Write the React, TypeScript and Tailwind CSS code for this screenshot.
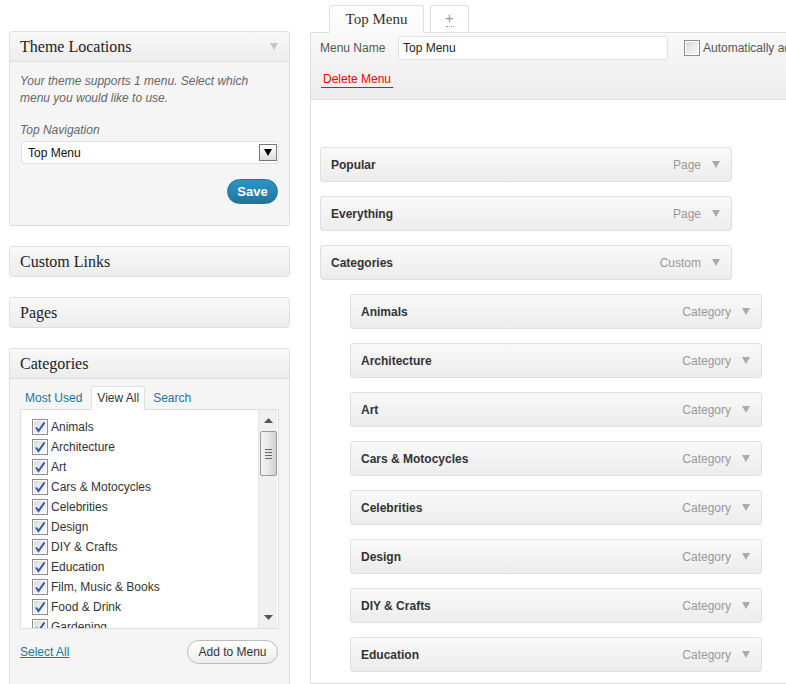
import React from 'react';

const sans = "font-['Liberation_Sans',Arial,sans-serif]";
const serif = "font-['Liberation_Serif','Times_New_Roman',serif]";

const categories = [
  'Animals',
  'Architecture',
  'Art',
  'Cars & Motocycles',
  'Celebrities',
  'Design',
  'DIY & Crafts',
  'Education',
  'Film, Music & Books',
  'Food & Drink',
  'Gardening',
];

const topItems = [
  { title: 'Popular', type: 'Page' },
  { title: 'Everything', type: 'Page' },
  { title: 'Categories', type: 'Custom' },
];

const subItems = [
  'Animals',
  'Architecture',
  'Art',
  'Cars & Motocycles',
  'Celebrities',
  'Design',
  'DIY & Crafts',
  'Education',
];

const Arrow = ({ className = '' }: { className?: string }) => (
  <svg width="8" height="7" viewBox="0 0 8 7" className={className}>
    <path d="M0 0 L8 0 L4 7 Z" fill="currentColor" />
  </svg>
);

const CheckBox = ({ checked = true }: { checked?: boolean }) => (
  <svg width="16" height="16" viewBox="0 0 16 16" className="shrink-0">
    <defs>
      <linearGradient id="cbg" x1="0" y1="0" x2="1" y2="1">
        <stop offset="0" stopColor="#dcdcdc" />
        <stop offset="1" stopColor="#f8f8f8" />
      </linearGradient>
    </defs>
    <rect x="0.5" y="0.5" width="15" height="15" fill="#fff" stroke="#8f8f8f" />
    <rect x="2" y="2" width="12" height="12" fill="url(#cbg)" />
    {checked && (
      <path d="M4 8.5 L6.5 12 L12.5 3.5" fill="none" stroke="#3655a8" strokeWidth="2" />
    )}
  </svg>
);

const PanelHeader = ({ title, arrow = false, open = false }: { title: string; arrow?: boolean; open?: boolean }) => (
  <div
    className={`flex items-center justify-between px-[10px] bg-gradient-to-b from-[#f9f9f9] to-[#ececec] rounded-t-[3px] ${
      open ? 'h-[30px] border-b border-[#dfdfdf]' : 'h-[29px] rounded-b-[3px]'
    }`}
  >
    <span className={`${serif} text-[16px] text-[#222]`}>{title}</span>
    {arrow && <Arrow className="text-[#c4c4c4] mr-[1px]" />}
  </div>
);

const MenuItem = ({ title, type }: { title: string; type: string }) => (
  <div className="w-[412px] h-[35px] flex items-center justify-between pl-[10px] pr-[11px] border border-[#dfdfdf] rounded-[3px] bg-gradient-to-b from-[#f9f9f9] to-[#ececec]">
    <span className="text-[12px] font-bold text-[#333]">{title}</span>
    <span className="flex items-center gap-[11px]">
      <span className="text-[12px] text-[#999]">{type}</span>
      <Arrow className="text-[#aaa]" />
    </span>
  </div>
);

export default function App() {
  return (
    <div className={`${sans} w-[786px] h-[684px] overflow-hidden bg-white flex`}>
      {/* left column */}
      <div className="w-[281px] shrink-0 ml-[9px] pt-[31px] flex flex-col gap-[20px]">
        <div className="border border-[#dfdfdf] rounded-[3px] bg-[#f5f5f5]">
          <PanelHeader title="Theme Locations" arrow open />
          <div className="px-[10px] pt-[11px] pb-[21px]">
            <p className="italic text-[12px] leading-[17px] text-[#666]">
              Your theme supports 1 menu. Select which menu you would like to use.
            </p>
            <p className="italic text-[12px] leading-[17px] text-[#666] mt-[15px]">Top Navigation</p>
            <div className="mt-[2px] ml-[1px] w-[258px] h-[23px] bg-white border border-[#dfdfdf] rounded-[3px] flex items-center justify-between pl-[6px] pr-[1px]">
              <span className="text-[12px] text-[#111]">Top Menu</span>
              <span className="w-[18px] h-[17px] border border-[#777] bg-gradient-to-b from-white to-[#dcdcdc] flex items-center justify-center">
                <Arrow className="text-black" />
              </span>
            </div>
            <div className="flex justify-end mt-[15px] pr-[1px]">
              <button className="w-[51px] h-[25px] rounded-full bg-gradient-to-b from-[#2a95c5] to-[#21759b] border border-[#21759b] text-white text-[13px] font-bold">
                Save
              </button>
            </div>
          </div>
        </div>

        <div className="border border-[#dfdfdf] rounded-[3px]">
          <PanelHeader title="Custom Links" />
        </div>
        <div className="border border-[#dfdfdf] rounded-[3px]">
          <PanelHeader title="Pages" />
        </div>

        <div className="border border-[#dfdfdf] rounded-[3px] bg-[#f5f5f5] h-[400px] shrink-0">
          <PanelHeader title="Categories" open />
          <div className="px-[10px] pt-[7px]">
            <div className="flex items-end h-[23px] text-[12px]">
              <span className="px-[5px] text-[#21759b] leading-[22px]">Most Used</span>
              <span className="ml-[4px] px-[5px] h-[24px] leading-[22px] bg-white border border-b-0 border-[#dfdfdf] rounded-t-[3px] text-[#333] relative top-[1px]">
                View All
              </span>
              <span className="ml-[3px] px-[5px] text-[#21759b] leading-[22px]">Search</span>
            </div>
            <div className="w-[259px] h-[220px] bg-white border border-[#dfdfdf] flex overflow-hidden">
              <div className="flex-1 pl-[11px] pt-[9px] flex flex-col">
                {categories.map((c) => (
                  <div key={c} className="h-[20px] shrink-0 flex items-start gap-[3px]">
                    <CheckBox />
                    <span className="text-[12px] leading-[16px] text-[#333]">{c}</span>
                  </div>
                ))}
              </div>
              <div className="w-[19px] shrink-0 mr-[1px] bg-[#f0f0f0] border-l border-[#e4e4e4] flex flex-col items-center">
                <svg width="9" height="5" viewBox="0 0 9 5" className="mt-[8px] text-[#555]">
                  <path d="M0 5 L4.5 0 L9 5 Z" fill="currentColor" />
                </svg>
                <div className="mt-[8px] w-[17px] h-[45px] border border-[#999] rounded-[2px] bg-gradient-to-r from-[#f4f4f4] via-[#e8e8e8] to-[#cfcfcf] flex flex-col items-center justify-center gap-[2px]">
                  <span className="w-[7px] h-[1px] bg-[#666]" />
                  <span className="w-[7px] h-[1px] bg-[#666]" />
                  <span className="w-[7px] h-[1px] bg-[#666]" />
                  <span className="w-[7px] h-[1px] bg-[#666]" />
                </div>
                <div className="flex-1" />
                <svg width="9" height="5" viewBox="0 0 9 5" className="mb-[8px] text-[#555]">
                  <path d="M0 0 L9 0 L4.5 5 Z" fill="currentColor" />
                </svg>
              </div>
            </div>
            <div className="flex items-center justify-between mt-[11px] pr-[1px]">
              <span className="text-[12px] text-[#21759b] underline">Select All</span>
              <button className="w-[91px] h-[24px] rounded-full border border-[#bbb] bg-gradient-to-b from-white to-[#ededed] text-[12px] text-[#333]">
                Add to Menu
              </button>
            </div>
          </div>
        </div>
      </div>

      {/* right column */}
      <div className="ml-[20px] w-[600px] shrink-0 pt-[4px] flex flex-col">
        <div className="flex items-end pl-[19px] gap-[6px] relative top-[1px] z-10">
          <div className="w-[95px] h-[28px] border border-b-0 border-[#dfdfdf] rounded-t-[3px] bg-gradient-to-b from-white to-[#f9f9f9] flex items-center justify-center">
            <span className={`${serif} text-[15px] text-[#333]`}>Top Menu</span>
          </div>
          <div className="w-[39px] h-[27px] mb-[1px] border border-b-0 border-[#dfdfdf] rounded-t-[3px] bg-white flex flex-col items-center justify-center">
            <span className="text-[15px] leading-[14px] text-[#999]">+</span>
            <span className="w-[8px] border-t border-dotted border-[#999] mt-[1px]" />
          </div>
        </div>
        <div className="flex-1 border border-[#dfdfdf] border-r-0">
          <div className="h-[67px] bg-gradient-to-b from-[#f9f9f9] to-[#ececec] border-b border-[#dfdfdf] pl-[9px] pt-[3px]">
            <div className="flex items-center h-[24px]">
              <span className="text-[12px] text-[#555] w-[78px]">Menu Name</span>
              <div className="w-[270px] h-[24px] bg-white border border-[#dfdfdf] rounded-[3px] flex items-center pl-[4px]">
                <span className="text-[12px] text-[#222]">Top Menu</span>
              </div>
              <span className="ml-[16px] mr-[3px]">
                <CheckBox checked={false} />
              </span>
              <span className="text-[12px] text-[#555] whitespace-nowrap">Automatically add new top-level pages</span>
            </div>
            <div className="mt-[6px] ml-[1px]">
              <span className="text-[12px] text-[#f00] px-[2px] pb-[1px] border-b border-[#f00]">Delete Menu</span>
            </div>
          </div>
          <div className="pt-[47px] pl-[9px] flex flex-col gap-[14px]">
            {topItems.map((i) => (
              <MenuItem key={i.title} title={i.title} type={i.type} />
            ))}
            {subItems.map((s) => (
              <div key={s} className="pl-[30px]">
                <MenuItem title={s} type="Category" />
              </div>
            ))}
          </div>
        </div>
      </div>
    </div>
  );
}
